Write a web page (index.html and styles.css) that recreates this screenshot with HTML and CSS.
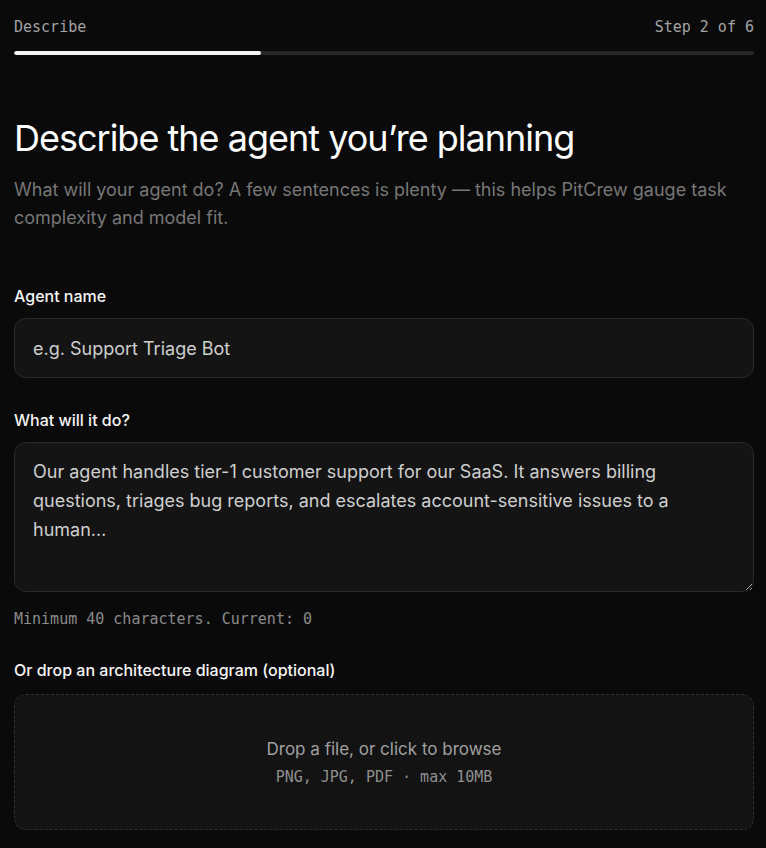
FILE: index.html
```html
<!DOCTYPE html>
<html>
<head>
<meta charset="utf-8">
<link rel="stylesheet" href="styles.css">
</head>
<body>
<main class="page">
  <div class="stepper">
    <div class="stepper-row">
      <span class="mono">Describe</span>
      <span class="mono">Step 2 of 6</span>
    </div>
    <div class="track"><div class="fill" style="width:33.333%"></div></div>
  </div>
  <h1 class="title">Describe the agent you’re planning</h1>
  <p class="subtitle">What will your agent do? A few sentences is plenty — this helps PitCrew gauge task complexity and model fit.</p>

  <div class="field field-first">
    <label class="label">Agent name</label>
    <input class="input" type="text" placeholder="e.g. Support Triage Bot">
  </div>

  <div class="field">
    <label class="label">What will it do?</label>
    <textarea class="textarea" placeholder="Our agent handles tier-1 customer support for our SaaS. It answers billing questions, triages bug reports, and escalates account-sensitive issues to a human…"></textarea>
    <div class="hint">Minimum 40 characters. Current: 0</div>
  </div>

  <div class="field field-drop">
    <label class="label label-drop">Or drop an architecture diagram (optional)</label>
    <div class="drop">
      <div class="drop-main">Drop a file, or click to browse</div>
      <div class="drop-sub">PNG, JPG, PDF · max 10MB</div>
    </div>
  </div>
</main>
</body>
</html>
```
FILE: styles.css
```css
html, body {
  margin: 0;
  background: #0a0a0a;
}
body {
  font-family: Inter, "Noto Sans", sans-serif;
  color: #f2f2f2;
}
.page {
  padding: 18px 12px 0 14px;
}
.mono {
  font-family: "DejaVu Sans Mono", monospace;
  font-size: 15px;
  color: #a3a3a3;
}
.stepper-row {
  display: flex;
  justify-content: space-between;
  line-height: 18px;
}
.track {
  margin-top: 15px;
  height: 4px;
  border-radius: 2px;
  background: #262626;
  overflow: hidden;
}
.fill {
  height: 100%;
  background: #f5f5f5;
  border-radius: 2px;
}
.title {
  margin: 61px 0 0;
  font-size: 36px;
  font-weight: 400;
  letter-spacing: -1px;
  line-height: 44px;
  color: #fff;
}
.subtitle {
  margin: 16px 0 0;
  font-size: 18px;
  line-height: 28px;
  color: #777;
}
.field {
  margin-top: 32px;
  display: flex;
  flex-direction: column;
}
.field-first { margin-top: 54px; }
.field-drop { margin-top: 31px; }
.label {
  font-size: 16px;
  font-weight: 500;
  line-height: 20px;
  color: #f5f5f5;
  margin-bottom: 12px;
}
.label-drop { margin-bottom: 14px; }
.input, .textarea {
  box-sizing: border-box;
  width: 100%;
  background: #141414;
  border: 1px solid #2a2a2a;
  border-radius: 12px;
  color: #eee;
  font-family: inherit;
  font-size: 18px;
  padding: 0 18px;
  outline: none;
}
.input { height: 60px; }
.textarea {
  height: 150px;
  padding-top: 14px;
  line-height: 29px;
  resize: vertical;
}
.input::placeholder, .textarea::placeholder { color: #cfcfcf; }
.hint {
  margin-top: 17px;
  font-family: "DejaVu Sans Mono", monospace;
  font-size: 15px;
  line-height: 20px;
  color: #8a8a8a;
}
.drop {
  box-sizing: border-box;
  height: 136px;
  border: 1px dashed #2e2e2e;
  border-radius: 12px;
  background: #131313;
  display: flex;
  flex-direction: column;
  align-items: center;
  justify-content: center;
  gap: 8px;
}
.drop-main {
  font-size: 17px;
  line-height: 22px;
  color: #a0a0a0;
}
.drop-sub {
  font-family: "DejaVu Sans Mono", monospace;
  font-size: 15px;
  line-height: 18px;
  color: #8f8f8f;
}
```
